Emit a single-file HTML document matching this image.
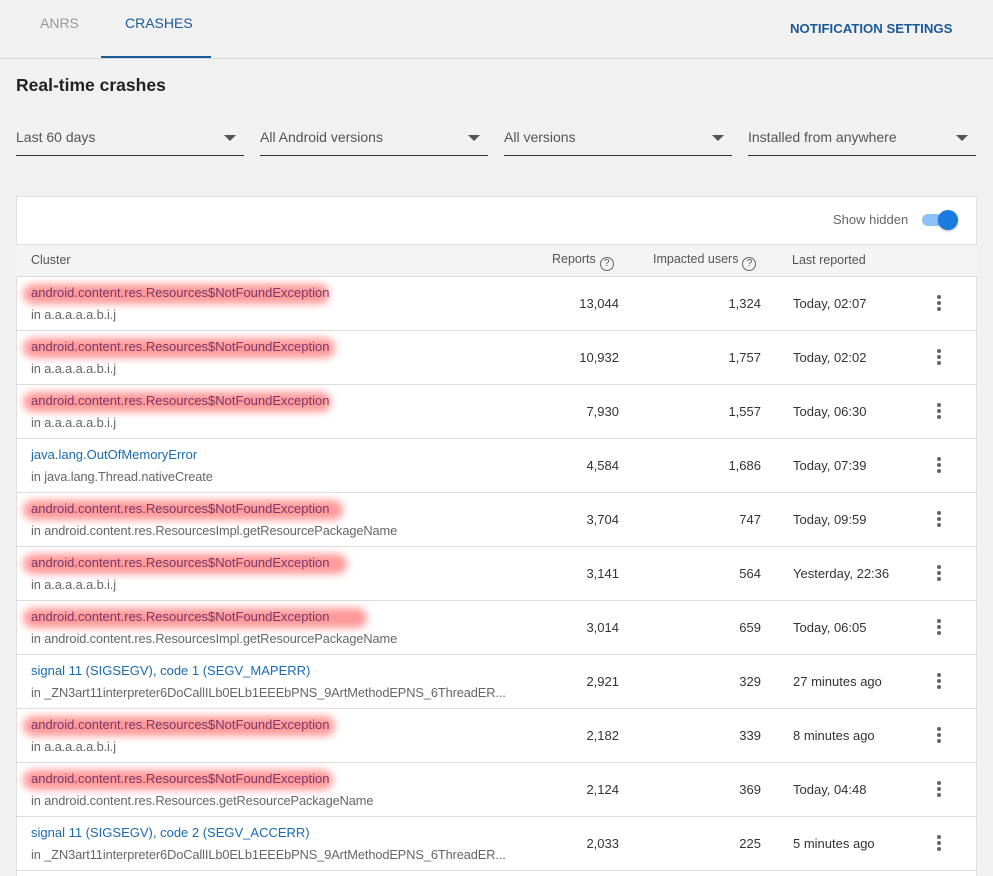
<!DOCTYPE html>
<html><head><meta charset="utf-8">
<style>
*{margin:0;padding:0;box-sizing:border-box}
html,body{width:993px;height:876px;overflow:hidden}
body{background:#f1f1f1;font-family:"Liberation Sans",Arial,sans-serif;position:relative;color:#333}
.abs{position:absolute}
.tab{font-size:14px;top:15px;}
.dd{top:127px;height:29px;border-bottom:1.5px solid #333;font-size:14px;color:#555;padding-top:2px}
.dd .tri{position:absolute;right:8px;top:8px;width:0;height:0;border-left:6px solid transparent;border-right:6px solid transparent;border-top:6px solid #555}
.card{left:16px;top:196px;width:961px;height:680px;background:#fff;border:1px solid #e0e0e0;border-bottom:none}
.hdr{left:16px;top:244px;width:961px;height:33px;background:#f4f4f4;border-top:1px solid #ddd;border-bottom:1px solid #ddd;font-size:12.5px;color:#555}
.row{position:absolute;left:16px;width:961px;height:54px;border-bottom:1px solid #ddd;font-size:13px}
.t{position:absolute;left:15px;top:8px;color:#1a6aad;white-space:nowrap}
.hl{position:absolute;left:7px;top:7px;height:20px;background:rgba(255,110,110,.7);border-radius:10px;filter:blur(4px)}
.t.r{color:#7a3a6a}
.s{position:absolute;left:15px;top:30px;color:#666;white-space:nowrap;font-size:12.8px;letter-spacing:-.1px}
.n1{position:absolute;right:358px;top:19px;color:#333}
.n2{position:absolute;right:216px;top:19px;color:#333}
.d{position:absolute;left:777px;top:19px;color:#333}
.k{position:absolute;left:921px;top:18px;width:4px}
.k i{display:block;width:4px;height:4px;border-radius:50%;background:#666;margin-bottom:2px}
.q{display:inline-block;width:14px;height:14px;border:1.3px solid #666;border-radius:50%;font-size:10px;text-align:center;line-height:12px;vertical-align:-3px;margin-left:4px}
</style></head><body>
<div class="abs tab" style="left:40px;color:#999">ANRS</div>
<div class="abs tab" style="left:125px;color:#1a5a96">CRASHES</div>
<div class="abs" style="left:101px;top:56px;width:110px;height:2px;background:#1a5a96"></div>
<div class="abs" style="left:0;top:58px;width:993px;height:1px;background:#d6d6d6"></div>
<div class="abs" style="left:790px;top:21px;font-size:13.2px;color:#1a5a96;font-weight:bold">NOTIFICATION SETTINGS</div>
<div class="abs" style="left:16px;top:75px;font-size:17.5px;font-weight:bold;color:#222">Real-time crashes</div>
<div class="abs dd" style="left:16px;width:228px">Last 60 days<span class="tri"></span></div>
<div class="abs dd" style="left:260px;width:228px">All Android versions<span class="tri"></span></div>
<div class="abs dd" style="left:504px;width:228px">All versions<span class="tri"></span></div>
<div class="abs dd" style="left:748px;width:228px">Installed from anywhere<span class="tri"></span></div>
<div class="abs card"></div>
<div class="abs" style="left:833px;top:212px;font-size:13px;color:#666">Show hidden</div>
<div class="abs" style="left:922px;top:214px;width:33px;height:12px;border-radius:6px;background:#8cc2f5"></div>
<div class="abs" style="left:938px;top:210px;width:20px;height:20px;border-radius:50%;background:#1a7ae0;box-shadow:0 1px 2px rgba(0,0,0,.3)"></div>
<div class="abs hdr">
<span class="abs" style="left:15px;top:8px">Cluster</span>
<span class="abs" style="left:536px;top:7px">Reports<span class="q">?</span></span>
<span class="abs" style="left:637px;top:7px">Impacted users<span class="q">?</span></span>
<span class="abs" style="left:776px;top:8px">Last reported</span>
</div>

<div class="row" style="top:277px"><span class="hl" style="width:306px"></span><span class="t r">android.content.res.Resources$NotFoundException</span><span class="s">in a.a.a.a.a.b.i.j</span><span class="n1">13,044</span><span class="n2">1,324</span><span class="d">Today, 02:07</span><span class="k"><i></i><i></i><i></i></span></div>
<div class="row" style="top:331px"><span class="hl" style="width:312px"></span><span class="t r">android.content.res.Resources$NotFoundException</span><span class="s">in a.a.a.a.a.b.i.j</span><span class="n1">10,932</span><span class="n2">1,757</span><span class="d">Today, 02:02</span><span class="k"><i></i><i></i><i></i></span></div>
<div class="row" style="top:385px"><span class="hl" style="width:308px"></span><span class="t r">android.content.res.Resources$NotFoundException</span><span class="s">in a.a.a.a.a.b.i.j</span><span class="n1">7,930</span><span class="n2">1,557</span><span class="d">Today, 06:30</span><span class="k"><i></i><i></i><i></i></span></div>
<div class="row" style="top:439px"><span class="t">java.lang.OutOfMemoryError</span><span class="s">in java.lang.Thread.nativeCreate</span><span class="n1">4,584</span><span class="n2">1,686</span><span class="d">Today, 07:39</span><span class="k"><i></i><i></i><i></i></span></div>
<div class="row" style="top:493px"><span class="hl" style="width:320px"></span><span class="t r">android.content.res.Resources$NotFoundException</span><span class="s">in android.content.res.ResourcesImpl.getResourcePackageName</span><span class="n1">3,704</span><span class="n2">747</span><span class="d">Today, 09:59</span><span class="k"><i></i><i></i><i></i></span></div>
<div class="row" style="top:547px"><span class="hl" style="width:324px"></span><span class="t r">android.content.res.Resources$NotFoundException</span><span class="s">in a.a.a.a.a.b.i.j</span><span class="n1">3,141</span><span class="n2">564</span><span class="d">Yesterday, 22:36</span><span class="k"><i></i><i></i><i></i></span></div>
<div class="row" style="top:601px"><span class="hl" style="width:344px"></span><span class="t r">android.content.res.Resources$NotFoundException</span><span class="s">in android.content.res.ResourcesImpl.getResourcePackageName</span><span class="n1">3,014</span><span class="n2">659</span><span class="d">Today, 06:05</span><span class="k"><i></i><i></i><i></i></span></div>
<div class="row" style="top:655px"><span class="t">signal 11 (SIGSEGV), code 1 (SEGV_MAPERR)</span><span class="s">in _ZN3art11interpreter6DoCallILb0ELb1EEEbPNS_9ArtMethodEPNS_6ThreadER...</span><span class="n1">2,921</span><span class="n2">329</span><span class="d">27 minutes ago</span><span class="k"><i></i><i></i><i></i></span></div>
<div class="row" style="top:709px"><span class="hl" style="width:312px"></span><span class="t r">android.content.res.Resources$NotFoundException</span><span class="s">in a.a.a.a.a.b.i.j</span><span class="n1">2,182</span><span class="n2">339</span><span class="d">8 minutes ago</span><span class="k"><i></i><i></i><i></i></span></div>
<div class="row" style="top:763px"><span class="hl" style="width:310px"></span><span class="t r">android.content.res.Resources$NotFoundException</span><span class="s">in android.content.res.Resources.getResourcePackageName</span><span class="n1">2,124</span><span class="n2">369</span><span class="d">Today, 04:48</span><span class="k"><i></i><i></i><i></i></span></div>
<div class="row" style="top:817px"><span class="t">signal 11 (SIGSEGV), code 2 (SEGV_ACCERR)</span><span class="s">in _ZN3art11interpreter6DoCallILb0ELb1EEEbPNS_9ArtMethodEPNS_6ThreadER...</span><span class="n1">2,033</span><span class="n2">225</span><span class="d">5 minutes ago</span><span class="k"><i></i><i></i><i></i></span></div>
</body></html>
